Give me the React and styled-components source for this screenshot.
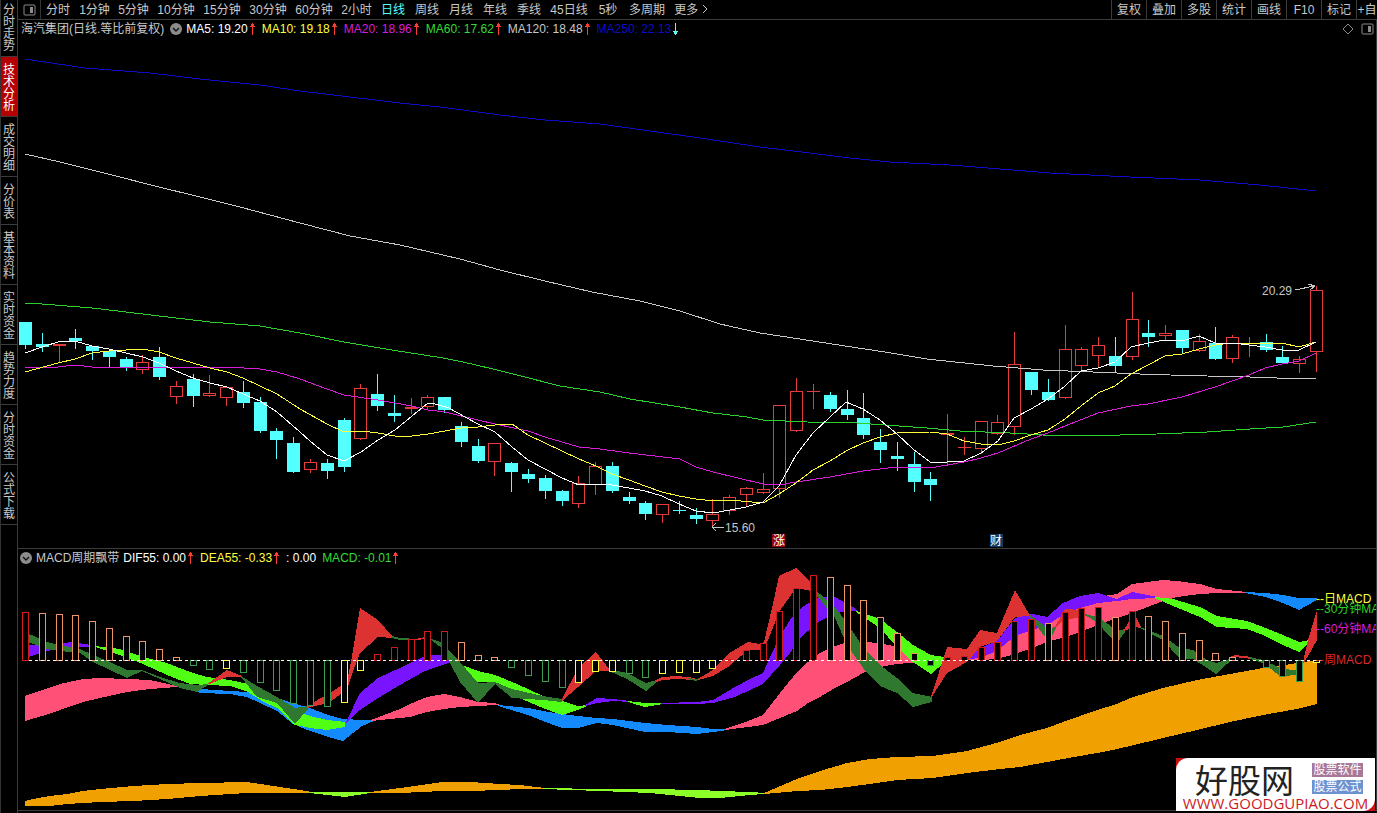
import React from "react";
import styled, { createGlobalStyle } from "styled-components";

const GlobalStyle = createGlobalStyle`
  * {
    box-sizing: border-box;
  }
  body {
    margin: 0;
    background: #000;
    color: #c8c8c8;
    font-family: "Liberation Sans", "Noto Sans CJK SC", sans-serif;
    font-size: 12px;
    line-height: 16px;
  }
  button {
    border: 0;
    padding: 0;
    background: none;
    color: inherit;
    font: inherit;
    cursor: pointer;
  }
`;

const Page = styled.div`
  position: relative;
  display: flex;
  min-height: 100vh;
  overflow: hidden;
`;

/* ---------- 左侧栏 ---------- */

const Sidebar = styled.nav`
  flex: none;
  width: 18px;
  border-left: 1px solid #333;
  border-right: 1px solid #3c3c3c;
  margin-top: -3px;
`;

const SideButton = styled.button`
  display: block;
  width: 100%;
  padding: 7px 2px 4px;
  border-bottom: 1px solid #3c3c3c;
  line-height: 12px;
  word-break: break-all;
  text-align: center;
  color: ${(props) => (props.$active ? "#fff" : "#c8c8c8")};
  background: ${(props) => (props.$active ? "#b40000" : "transparent")};
`;

const Main = styled.main`
  flex: 1;
  min-width: 0;
`;

/* ---------- 周期工具栏 ---------- */

const Toolbar = styled.div`
  display: flex;
  height: 20px;
  border-bottom: 1px solid #3c3c3c;
  white-space: nowrap;
  overflow: hidden;
`;

const LayoutButton = styled.button`
  display: flex;
  align-items: center;
  justify-content: center;
  width: 23px;
  border-right: 1px solid #333;
`;

const PeriodButton = styled.button`
  flex: none;
  width: ${(props) => props.$w || 34}px;
  text-align: center;
  color: ${(props) => (props.$active ? "#54ffff" : "#c8c8c8")};
`;

const Tools = styled.div`
  display: flex;
  margin-left: auto;
`;

const ToolButton = styled.button`
  flex: none;
  width: ${(props) => props.$w || 35}px;
  border-left: 1px solid #3c3c3c;
  overflow: hidden;
`;

/* ---------- 图表面板 ---------- */

const Panel = styled.section`
  border-right: 1px solid #3c3c3c;
  border-bottom: 1px solid #3c3c3c;
`;

const PanelHeader = styled.header`
  display: flex;
  align-items: center;
  height: ${(props) => props.$h}px;
  padding: 0 2px 0 ${(props) => props.$left || 0}px;
  white-space: nowrap;
`;

const PanelName = styled.span`
  margin-right: 4px;
`;

const ToggleButton = styled.button`
  display: flex;
  margin: 0 4px 0 2px;
`;

const Value = styled.span`
  display: flex;
  align-items: center;
  margin-right: 6px;
  color: ${(props) => props.$color};
  svg {
    margin-left: 1px;
    shape-rendering: crispEdges;
  }
`;

const HeaderIcons = styled.div`
  display: flex;
  align-items: center;
  gap: 7px;
  margin-left: auto;
`;

const Chart = styled.svg`
  display: block;
  width: 100%;
  height: auto;
  shape-rendering: crispEdges;
  text {
    font-family: "Liberation Sans", "Noto Sans CJK SC", sans-serif;
    font-size: 12px;
  }
`;

/* ---------- 水印 ---------- */

const Brand = styled.a`
  position: absolute;
  right: 2px;
  bottom: 2px;
  width: 199px;
  background: #c81010;
  text-decoration: none;
`;

const BrandCard = styled.div`
  padding: 4px 6px 0;
  background: #fff;
  border-radius: 12px 0 12px 0;
`;

const BrandTop = styled.div`
  display: flex;
  align-items: center;
  justify-content: space-between;
  height: 33px;
  padding: 0 6px 0 13px;
`;

const BrandName = styled.span`
  color: #222;
  font-family: "Noto Sans CJK SC", sans-serif;
  font-size: 33px;
  line-height: 30px;
`;

const BrandTags = styled.span`
  display: flex;
  flex-direction: column;
  gap: 3px;
`;

const BrandTag = styled.span`
  width: 51px;
  text-align: center;
  line-height: 14px;
  color: #fff;
  background: ${(props) => props.$bg};
`;

const BrandUrl = styled.div`
  color: #cc1a24;
  font-family: "Open Sans", sans-serif;
  font-size: 15px;
  line-height: 16px;
  text-align: center;
  white-space: nowrap;
`;

/* ---------- 数据 ---------- */

const sideItems = [
  "分时走势",
  "技术分析",
  "成交明细",
  "分价表",
  "基本资料",
  "实时资金",
  "趋势力度",
  "分时资金",
  "公式下载",
];

const periods = [
  ["分时"],
  ["1分钟", 39],
  ["5分钟", 39],
  ["10分钟", 46],
  ["15分钟", 46],
  ["30分钟", 46],
  ["60分钟", 46],
  ["2小时", 39],
  ["日线"],
  ["周线"],
  ["月线"],
  ["年线"],
  ["季线"],
  ["45日线", 46],
  ["5秒", 32],
  ["多周期", 46],
];

const tools = ["复权", "叠加", "多股", "统计", "画线", "F10", "标记"];

const maValues = [
  ["MA5: 19.20", "#fff", "up"],
  ["MA10: 19.18", "#ffff40", "up"],
  ["MA20: 18.96", "#d81cd8", "up"],
  ["MA60: 17.62", "#32dc32", "up"],
  ["MA120: 18.48", "#c8c8c8", "up"],
  ["MA250: 22.13", "#0c0cc8", "down"],
];

const macdValues = [
  ["DIF55: 0.00", "#fff", "up"],
  ["DEA55: -0.33", "#ffff40", "up"],
  [": 0.00", "#fff", null],
  ["MACD: -0.01", "#32dc32", "up"],
];

// [最高, 实体上沿, 实体下沿, 最低, 是否阳线]
const candles = [
  [322, 322, 345, 348, 0],
  [333, 344, 347, 351, 0],
  [344, 344, 346, 361, 1],
  [329, 338, 341, 348, 0],
  [346, 346, 351, 359, 0],
  [351, 351, 357, 366, 0],
  [357, 359, 367, 370, 0],
  [355, 362, 370, 373, 1],
  [347, 357, 377, 379, 0],
  [381, 386, 397, 403, 1],
  [374, 379, 396, 406, 0],
  [375, 393, 396, 396, 1],
  [386, 387, 398, 405, 1],
  [381, 392, 403, 407, 0],
  [397, 402, 431, 432, 0],
  [428, 431, 440, 458, 0],
  [437, 443, 472, 472, 0],
  [459, 462, 470, 472, 1],
  [459, 463, 471, 478, 0],
  [418, 420, 467, 471, 0],
  [384, 388, 439, 439, 1],
  [374, 394, 406, 410, 0],
  [395, 413, 416, 421, 0],
  [398, 407, 409, 413, 1],
  [395, 397, 407, 409, 1],
  [397, 397, 410, 412, 0],
  [422, 426, 442, 446, 0],
  [439, 446, 461, 462, 0],
  [443, 443, 462, 475, 1],
  [462, 463, 472, 491, 0],
  [469, 474, 479, 482, 0],
  [475, 478, 491, 498, 0],
  [490, 491, 501, 505, 0],
  [476, 483, 504, 507, 1],
  [462, 466, 485, 494, 1],
  [462, 466, 491, 492, 0],
  [492, 497, 501, 503, 0],
  [501, 503, 514, 519, 0],
  [504, 504, 515, 522, 1],
  [501, 510, 511, 513, 0],
  [508, 515, 519, 523, 0],
  [499, 514, 521, 526, 1],
  [495, 497, 511, 514, 1],
  [487, 488, 495, 506, 1],
  [473, 489, 493, 493, 1],
  [405, 405, 489, 497, 1],
  [378, 391, 431, 431, 1],
  [384, 391, 391, 408, 1],
  [392, 395, 409, 411, 0],
  [390, 409, 415, 419, 0],
  [393, 418, 435, 438, 0],
  [429, 442, 450, 462, 0],
  [442, 456, 459, 470, 0],
  [452, 464, 482, 491, 0],
  [472, 479, 485, 500, 0],
  [414, 433, 435, 465, 1],
  [437, 447, 448, 454, 1],
  [421, 421, 449, 453, 1],
  [415, 422, 434, 434, 1],
  [332, 364, 427, 434, 1],
  [372, 372, 390, 394, 0],
  [379, 392, 400, 400, 0],
  [325, 349, 398, 398, 1],
  [347, 349, 366, 370, 1],
  [337, 345, 356, 367, 1],
  [337, 356, 366, 372, 0],
  [292, 319, 357, 359, 1],
  [320, 333, 337, 346, 0],
  [325, 333, 336, 340, 1],
  [330, 330, 348, 352, 0],
  [334, 341, 351, 351, 1],
  [327, 343, 359, 359, 0],
  [335, 337, 359, 362, 1],
  [337, 343, 343, 356, 1],
  [334, 342, 350, 351, 0],
  [346, 357, 363, 363, 0],
  [356, 359, 364, 372, 1],
  [286, 290, 352, 371, 1],
];

const averages = [
  {
    color: "#0c0cc8",
    points:
      "25,59 65,65 85,68 150,73 200,79 260,85 300,91 350,97 400,103 440,107 500,115 545,120 600,124 650,131 700,138 760,147 810,153 850,158 890,162 950,165 1050,173 1130,177 1200,180 1260,185 1316,191",
  },
  {
    color: "#c8c8c8",
    points:
      "25,154 60,162 108,174 155,186 200,197 240,207 300,223 350,236 400,245 460,259 500,270 545,281 592,292 640,301 680,311 720,324 760,333 800,339 845,346 885,352 927,359 993,366 1043,370 1093,372 1140,374 1170,375 1207,376 1250,377 1277,378 1316,378",
  },
  {
    color: "#28d228",
    points:
      "25,303 42,304 92,308 126,312 176,318 210,322 260,326 300,333 344,342 392,350 443,358 463,362 493,369 513,374 560,386 600,392 630,399 680,407 713,413 747,417 763,420 807,422 857,423 885,425 927,428 960,431 1010,433 1043,435 1120,435 1157,434 1207,432 1250,429 1283,427 1316,422",
  },
  {
    color: "#d81cd8",
    points:
      "25,367 58,367 75,365 92,367 227,367 260,369 277,372 300,379 327,389 344,395 378,400 412,406 428,410 445,412 478,420 495,424 528,431 545,437 579,447 600,449 629,453 680,459 696,467 713,472 763,484 779,485 796,482 830,477 863,471 897,467 930,468 964,462 981,458 998,453 1031,439 1048,433 1065,426 1098,413 1131,406 1148,404 1182,397 1215,387 1249,375 1265,368 1282,364 1299,361 1316,353",
  },
  {
    color: "#ffff3c",
    points:
      "25,372 58,363 75,359 92,353 109,351 143,349 159,352 176,358 193,363 210,368 227,372 243,378 260,386 277,394 300,409 327,424 344,432 361,431 378,433 395,436 412,436 428,434 445,431 461,428 478,427 495,425 512,424 528,435 545,443 562,451 579,459 596,466 612,474 629,480 645,486 662,492 679,496 696,499 713,501 730,500 763,503 779,494 796,483 813,470 830,461 846,451 863,443 880,437 897,433 930,432 947,434 964,441 981,444 998,445 1014,441 1031,435 1048,430 1065,419 1081,406 1098,393 1115,386 1131,374 1148,365 1165,356 1182,354 1199,349 1215,345 1232,343 1282,343 1299,347 1316,342",
  },
  {
    color: "#fff",
    points:
      "25,353 42,347 58,342 75,341 92,346 109,349 126,353 143,357 159,363 176,371 193,378 210,383 227,387 243,394 260,401 277,412 300,432 310,441 327,455 344,461 361,452 378,440 395,430 412,416 428,403 435,404 449,408 465,417 478,424 495,432 512,447 528,460 545,469 562,478 579,485 600,484 612,485 629,488 645,491 662,496 679,504 696,511 713,513 730,510 746,507 763,502 779,486 796,455 813,433 830,417 846,402 863,409 880,420 897,434 913,449 930,462 947,462 964,461 981,453 998,441 1014,418 1031,409 1048,399 1065,386 1081,371 1098,368 1115,362 1131,347 1148,343 1165,340 1182,341 1199,336 1215,343 1232,343 1249,345 1265,347 1282,350 1299,350 1316,342",
  },
];

const PINK = "#ff5078";
const BLUE = "#148aff";
const PURPLE = "#7814ff";
const LIME = "#50ff14";
const RED = "#dc3232";
const FOREST = "#307830";
const ORANGE = "#f0a000";
const YELLOW_GREEN = "#8cff28";

// 飘带: [颜色, [x, 上沿, 下沿]...]
const ribbons = [
  // 周
  [ORANGE, [25, 801, 806], [33, 799, 806], [50, 796, 806], [67, 794, 804], [83, 791, 803], [100, 789, 802], [133, 786, 801], [167, 784, 799], [200, 783, 796], [247, 782, 793], [267, 785, 793], [300, 790, 793], [312, 792, 793]],
  [YELLOW_GREEN, [310, 792, 793], [345, 792, 797], [370, 792, 793]],
  [ORANGE, [370, 792, 793], [400, 788, 793], [442, 782, 791], [470, 782, 791], [500, 784, 790], [520, 785, 789], [545, 788, 789]],
  [YELLOW_GREEN, [543, 788, 789], [600, 789, 791], [650, 789, 793], [700, 790, 798], [720, 791, 798], [750, 792, 795], [765, 793, 794]],
  [ORANGE, [764, 793, 794], [797, 779, 791], [820, 771, 790], [847, 763, 787], [870, 759, 784], [897, 757, 780], [933, 756, 778], [967, 751, 773], [1000, 742, 769], [1020, 735, 767], [1047, 728, 762], [1063, 722, 759], [1097, 710, 753], [1117, 704, 749], [1130, 698, 746], [1163, 688, 738], [1180, 684, 734], [1197, 680, 730], [1230, 674, 722], [1263, 668, 715], [1280, 666, 712], [1297, 663, 709], [1317, 660, 704]],
  // 日
  [PINK, [25, 696, 721], [42, 690, 716], [60, 684, 710], [83, 679, 702], [100, 678, 698], [127, 679, 692], [150, 680, 689], [177, 686, 687], [197, 689, 689]],
  [BLUE, [193, 688, 690], [200, 689, 693], [230, 691, 694], [247, 692, 697], [260, 693, 703], [277, 698, 711], [293, 703, 724], [310, 708, 731], [328, 715, 737], [343, 719, 741], [362, 720, 726], [374, 720, 721]],
  [PINK, [371, 720, 721], [400, 709, 718], [410, 704, 717], [427, 697, 712], [444, 694, 709], [460, 697, 707], [478, 702, 706], [495, 703, 705], [500, 705, 706]],
  [BLUE, [498, 705, 706], [528, 708, 715], [543, 711, 721], [562, 714, 728], [578, 716, 728], [597, 718, 723], [613, 719, 725], [645, 723, 732], [667, 725, 732], [697, 727, 734], [713, 729, 732], [727, 729, 730]],
  [PINK, [725, 729, 730], [748, 721, 727], [763, 715, 725], [780, 693, 718], [797, 672, 711], [808, 662, 703], [820, 653, 697], [833, 647, 689], [847, 642, 682], [863, 642, 673], [880, 643, 667], [897, 647, 664], [920, 660, 662]],
  [PINK, [966, 659, 660], [980, 652, 660], [997, 645, 659], [1015, 634, 654], [1032, 628, 648], [1047, 622, 642], [1065, 613, 637], [1080, 606, 632], [1098, 597, 625], [1117, 594, 618], [1132, 584, 613], [1163, 580, 601], [1177, 581, 597], [1200, 584, 594], [1217, 589, 593], [1247, 592, 593]],
  [BLUE, [1245, 592, 593], [1265, 593, 597], [1283, 595, 603], [1299, 598, 610], [1317, 598, 600]],
  // 60分钟
  [PURPLE, [28, 645, 657], [47, 645, 651], [72, 642, 647], [97, 646, 647]],
  [LIME, [95, 646, 647], [120, 649, 655], [143, 657, 664], [167, 663, 675], [190, 672, 684], [207, 677, 685], [230, 680, 686], [248, 684, 692], [262, 690, 701], [277, 699, 708], [295, 710, 725], [310, 716, 728], [327, 720, 730], [345, 722, 727]],
  [PURPLE, [346, 722, 723], [360, 693, 710], [378, 678, 698], [400, 668, 685], [423, 657, 672], [433, 655, 668], [448, 655, 663], [463, 665, 667]],
  [LIME, [462, 665, 667], [478, 671, 682], [495, 675, 683], [517, 684, 697], [543, 696, 708], [562, 701, 715], [578, 706, 710], [587, 705, 706]],
  [PURPLE, [585, 705, 706], [597, 698, 703], [613, 699, 701], [630, 701, 702]],
  [LIME, [628, 701, 702], [645, 703, 707], [663, 703, 704]],
  [PURPLE, [661, 703, 704], [697, 702, 704], [713, 700, 703], [735, 687, 697], [750, 679, 690], [763, 673, 684], [771, 655, 675], [780, 636, 665], [790, 620, 653], [802, 607, 636], [820, 597, 621], [835, 597, 613], [853, 607, 611], [858, 611, 612]],
  [LIME, [856, 611, 612], [880, 619, 628], [897, 632, 647], [913, 645, 662], [931, 655, 674], [944, 657, 663]],
  [PURPLE, [960, 658, 660], [980, 648, 658], [997, 641, 651], [1015, 618, 636], [1032, 614, 630], [1047, 617, 625], [1063, 603, 615], [1080, 596, 608], [1098, 593, 603], [1117, 599, 601], [1132, 592, 599], [1157, 597, 598]],
  [LIME, [1155, 597, 598], [1173, 599, 606], [1183, 602, 610], [1200, 607, 617], [1217, 616, 627], [1247, 621, 629], [1263, 627, 635], [1283, 635, 645], [1299, 642, 652], [1309, 640, 643]],
  // 30分钟
  [FOREST, [25, 632, 641], [47, 642, 649], [60, 645, 651], [80, 649, 653], [93, 655, 662], [110, 662, 670], [127, 670, 678], [142, 670, 671], [160, 677, 679], [180, 683, 688], [197, 685, 692], [208, 684, 685]],
  [RED, [207, 684, 685], [227, 670, 677], [242, 676, 677]],
  [FOREST, [241, 676, 677], [257, 686, 697], [277, 697, 703], [295, 708, 724], [308, 706, 709]],
  [RED, [307, 706, 708], [328, 694, 703], [347, 682, 690], [352, 656, 674], [360, 608, 653], [378, 620, 637], [393, 637, 638]],
  [FOREST, [392, 636, 638], [400, 638, 640], [418, 639, 640]],
  [RED, [416, 639, 640], [425, 637, 639]],
  [FOREST, [431, 639, 640], [443, 643, 649], [450, 652, 663], [460, 662, 682], [478, 683, 703], [495, 682, 684], [512, 689, 698], [543, 696, 700], [562, 699, 702]],
  [RED, [562, 699, 701], [578, 668, 687], [596, 652, 671], [610, 670, 671]],
  [FOREST, [609, 669, 671], [627, 673, 679], [646, 683, 691], [657, 680, 682]],
  [RED, [656, 680, 682], [662, 677, 680], [677, 676, 679], [695, 678, 680]],
  [FOREST, [688, 678, 679], [696, 679, 681], [703, 677, 678]],
  [RED, [698, 679, 680], [713, 670, 676], [728, 654, 667], [748, 642, 650], [760, 644, 650], [764, 642, 650], [772, 608, 630], [779, 576, 612], [796, 568, 588], [811, 583, 591]],
  [FOREST, [813, 588, 591], [835, 607, 618], [847, 623, 645], [863, 647, 668], [880, 665, 686], [897, 678, 693], [913, 693, 707], [932, 697, 702]],
  [RED, [931, 697, 698], [947, 647, 673], [967, 649, 662], [980, 630, 647], [997, 633, 641], [1015, 590, 617], [1029, 614, 616]],
  [FOREST, [1029, 614, 616], [1045, 626, 637], [1050, 629, 640], [1056, 626, 628]],
  [RED, [1055, 627, 628], [1065, 609, 619], [1080, 610, 618], [1087, 615, 616]],
  [FOREST, [1085, 614, 615], [1098, 617, 623], [1108, 624, 635], [1117, 631, 643], [1125, 629, 632]],
  [RED, [1124, 630, 631], [1134, 613, 627], [1141, 627, 628]],
  [FOREST, [1140, 627, 628], [1163, 636, 640], [1180, 648, 659], [1193, 650, 659], [1207, 660, 668], [1216, 663, 674], [1227, 660, 664], [1232, 658, 660]],
  [RED, [1230, 657, 659], [1235, 655, 657], [1252, 657, 659]],
  [FOREST, [1250, 657, 659], [1263, 660, 663], [1280, 668, 676], [1299, 671, 675]],
  [RED, [1303, 662, 664], [1308, 640, 656], [1317, 610, 640]],
];

// MACD 柱: [末端 y, 颜色代号]
const bars = [
  [612, "r"], [613, "o"], [614, "o"], [615, "o"], [621, "o"], [628, "o"],
  [636, "o"], [641, "o"], [649, "o"], [657, "o"], [665, "g"], [669, "g"],
  [668, "y"], [672, "g"], [682, "g"], [690, "g"], [703, "g"], [705, "g"],
  [706, "g"], [702, "y"], [670, "y"], [654, "r"], [647, "r"], [639, "r"],
  [631, "r"], [631, "r"], [642, "o"], [655, "o"], [657, "o"], [667, "g"],
  [675, "g"], [681, "g"], [687, "g"], [682, "y"], [671, "y"], [671, "y"],
  [673, "g"], [677, "g"], [673, "y"], [672, "y"], [672, "y"], [668, "y"],
  [659, "r"], [650, "r"], [643, "r"], [611, "r"], [588, "r"], [575, "r"],
  [577, "o"], [585, "o"], [600, "o"], [617, "o"], [633, "o"], [653, "o"],
  [665, "g"], [657, "r"], [656, "r"], [647, "r"], [642, "r"], [621, "r"],
  [619, "r"], [623, "o"], [612, "r"], [608, "r"], [607, "r"], [617, "o"],
  [611, "r"], [616, "o"], [621, "o"], [633, "o"], [640, "o"], [653, "o"],
  [657, "o"], null, [667, "g"], [676, "g"], [681, "g"], [662, "y"],
];

const barColors = { r: "#d21c1c", o: "#f09464", g: "#3c9c50", y: "#ffff3c" };

const endLabels = [
  ["--日MACD", 603, "#ffff3c"],
  ["--30分钟MACD", 613, "#28d228"],
  ["--60分钟MACD", 633, "#d81cd8"],
  ["--周MACD", 664, "#dc2828"],
];

const ZERO = 660;
const xAt = (i) => 25 + Math.round((i * 1291) / 77);

/* ---------- 组件 ---------- */

const LayoutIcon = () => (
  <svg width="13" height="12" viewBox="0 0 13 12">
    <rect x="1" y="1" width="11" height="10" rx="1" fill="none" stroke="#8c8c8c" />
    <rect x="7" y="3" width="3" height="6" fill="#8c8c8c" />
  </svg>
);

const DownIcon = () => (
  <svg width="12" height="12" viewBox="0 0 12 12">
    <circle cx="6" cy="6" r="6" fill="#8c8c8c" />
    <path d="M3 5l3 3 3-3" fill="none" stroke="#101010" strokeWidth="1.4" />
  </svg>
);

const Arrow = ({ dir }) => (
  <svg width="7" height="14" viewBox="0 0 7 14">
    {dir === "up" ? (
      <path d="M3 1h1v1h1v2h1v1H4v8H3V5H1V4h1V2h1z" fill="#ff3c32" />
    ) : (
      <path d="M3 13h1v-1h1v-2h1V9H4V1H3v8H1v1h1v2h1z" fill="#54ffff" />
    )}
  </svg>
);

const Values = ({ items }) =>
  items.map(([label, color, dir]) => (
    <Value key={label} $color={color}>
      {label}
      {dir && <Arrow dir={dir} />}
    </Value>
  ));

const Candle = ({ x, data }) => {
  const [high, top, bottom, low, up] = data;
  const color = up ? "#e63c3c" : "#54ffff";
  return (
    <g>
      <rect x={x} y={high} width="1" height={low - high + 1} fill={color} />
      <rect x={x - 6} y={top} width="13" height={Math.max(bottom - top, 1)} fill={color} />
      {up && bottom - top > 2 ? (
        <rect x={x - 5} y={top + 1} width="11" height={bottom - top - 2} fill="#000" />
      ) : null}
    </g>
  );
};

const Bar = ({ x, end, color }) => {
  const y = Math.min(ZERO, end);
  const height = Math.abs(end - ZERO) + 1;
  return (
    <g>
      <rect x={x - 3} y={y} width="7" height={height} fill={color} />
      {height > 2 && <rect x={x - 2} y={y + 1} width="5" height={height - 2} fill="#000" />}
    </g>
  );
};

const Ribbon = ({ color, data }) => {
  const upper = data.map(([x, top]) => `${x},${top}`);
  const lower = data.map(([x, , bottom]) => `${x},${bottom}`).reverse();
  return <polygon points={[...upper, ...lower].join(" ")} fill={color} />;
};

const PriceChart = () => (
  <Chart viewBox="18 38 1358 510" role="img" aria-label="日线K线图">
    {candles.map((c, i) => (
      <Candle key={i} x={xAt(i)} data={c} />
    ))}
    {averages.map((ma) => (
      <polyline key={ma.color} points={ma.points} fill="none" stroke={ma.color} />
    ))}
    <text x="1262" y="295" fill="#c8c8c8">20.29</text>
    <path d="M1295 290L1314 286M1308 284L1315 286L1310 290" fill="none" stroke="#c8c8c8" />
    <text x="725" y="532" fill="#c8c8c8">15.60</text>
    <path d="M712 527H724M716 523L712 527L716 531" fill="none" stroke="#c8c8c8" />
    <rect x="772" y="534" width="13" height="13" fill="#96000f" />
    <text x="773" y="545" fill="#fff">涨</text>
    <rect x="990" y="534" width="13" height="13" fill="#0f3c64" />
    <text x="990" y="545" fill="#fff">财</text>
  </Chart>
);

const MacdChart = () => (
  <Chart viewBox="18 566 1358 244" role="img" aria-label="MACD周期飘带">
    {ribbons.map(([color, ...data], i) => (
      <Ribbon key={i} color={color} data={data} />
    ))}
    {bars.map((b, i) => b && <Bar key={i} x={xAt(i)} end={b[0]} color={barColors[b[1]]} />)}
    <path d="M29 660.500H1322" stroke="#fff" strokeDasharray="3 3" />
    {endLabels.map(([label, y, color]) => (
      <text key={label} x="1316" y={y} fill={color}>
        {label}
      </text>
    ))}
  </Chart>
);

const App = () => {
  return (
    <>
      <GlobalStyle />
      <Page>
        <Sidebar>
          {sideItems.map((item) => (
            <SideButton key={item} $active={item === "技术分析"}>
              {item}
            </SideButton>
          ))}
        </Sidebar>
        <Main>
          <Toolbar>
            <LayoutButton aria-label="切换布局">
              <LayoutIcon />
            </LayoutButton>
            {periods.map(([label, w]) => (
              <PeriodButton key={label} $w={w} $active={label === "日线"}>
                {label}
              </PeriodButton>
            ))}
            <PeriodButton $w={42}>
              更多{" "}
              <svg width="6" height="10" viewBox="0 0 6 10">
                <path d="M1 1l4 4-4 4" fill="none" stroke="#c8c8c8" />
              </svg>
            </PeriodButton>
            <Tools>
              {tools.map((item) => (
                <ToolButton key={item}>{item}</ToolButton>
              ))}
              <ToolButton $w={21}>+自</ToolButton>
            </Tools>
          </Toolbar>
          <Panel>
            <PanelHeader $h={18} $left={3}>
              <PanelName>海汽集团(日线.等比前复权)</PanelName>
              <ToggleButton aria-label="展开指标">
                <DownIcon />
              </ToggleButton>
              <Values items={maValues} />
              <HeaderIcons>
                <svg width="12" height="12" viewBox="0 0 12 12">
                  <path d="M6 1l5 5-5 5-5-5z" fill="none" stroke="#8c8c8c" />
                </svg>
                <LayoutIcon />
              </HeaderIcons>
            </PanelHeader>
            <PriceChart />
          </Panel>
          <Panel>
            <PanelHeader $h={17}>
              <ToggleButton aria-label="展开指标">
                <DownIcon />
              </ToggleButton>
              <PanelName>MACD周期飘带</PanelName>
              <Values items={macdValues} />
            </PanelHeader>
            <MacdChart />
          </Panel>
        </Main>
        <Brand href="#">
          <BrandCard>
            <BrandTop>
              <BrandName>好股网</BrandName>
              <BrandTags>
                <BrandTag $bg="#a87898">股票软件</BrandTag>
                <BrandTag $bg="#6e92d0">股票公式</BrandTag>
              </BrandTags>
            </BrandTop>
            <BrandUrl>WWW.GOODGUPIAO.COM</BrandUrl>
          </BrandCard>
        </Brand>
      </Page>
    </>
  );
};

export default App;
